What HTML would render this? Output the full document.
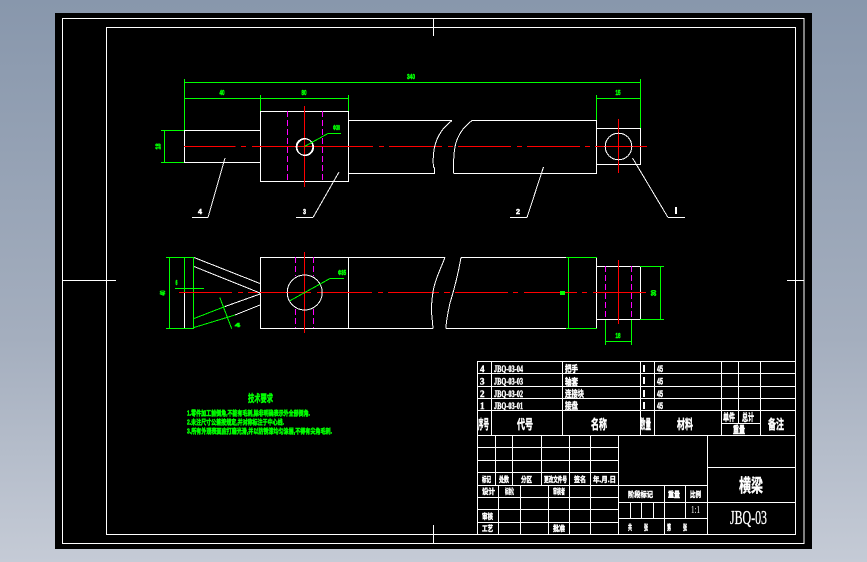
<!DOCTYPE html>
<html><head><meta charset="utf-8">
<style>
html,body{margin:0;padding:0;width:867px;height:562px;overflow:hidden;background:linear-gradient(180deg,#8897ac 0%,#a4aebe 60%,#c5cbd6 100%);}
svg{position:absolute;left:0;top:0;display:block}
text{font-family:"Liberation Sans","Noto Sans CJK SC",sans-serif;font-weight:700}
.w{fill:none;stroke:#fff;stroke-width:1}
.g{fill:none;stroke:#0f0;stroke-width:1}
.r{fill:none;stroke:#f00;stroke-width:1}
.m{fill:none;stroke:#f0f;stroke-width:1;stroke-dasharray:6 3}
.t{fill:#fff;font-size:9px;stroke:#fff;stroke-width:.5}
.gt{fill:#0f0;font-size:7.5px;stroke:#0f0;stroke-width:.6}
.n{font-family:"Liberation Serif","Noto Sans CJK SC",serif}
</style></head>
<body>
<svg width="867" height="562" viewBox="0 0 867 562" xmlns="http://www.w3.org/2000/svg" shape-rendering="crispEdges">
<rect x="55" y="13" width="757" height="536" fill="#000"/>
<rect class="w" x="62.5" y="18.5" width="741.5" height="525"/>
<rect class="w" x="106.5" y="27.5" width="689" height="507"/>
<path class="w" d="M433.5 18V36M433.5 525V543M62 280.5H116M787 280.5H804"/>

<!-- top view white -->
<path class="w" d="M184.5 130.5H260.5M184.5 162.5H260.5M184.5 130V163M260.5 111.5H348.5M260.5 181.5H348.5M260.5 111V182M348.5 111V182M348 120.5H452M348 173.5H435M472 120.5H596.5M454 173.5H596.5M596.5 120V174M596.5 128.5H640.5M596.5 164.5H640.5M640.5 128V165"/>
<path class="w" d="M192 217.5H208M296 217.5H313M510 217.5H527M668 217.5H685"/>

<!-- top view green -->
<path class="g" d="M184.5 79V130M184.5 82.5H640.5M640.5 79V128M260.5 95V111M184.5 98.5H348.5M348.5 95V111M596.5 95V120M596.5 98.5H640.5M161 130.5H184M161 162.5H184M164.5 130V163M328 133.5H341"/>

<!-- top view red -->
<path class="r" d="M184 146.5H235.5M241 146.5H246M252 146.5H373M379 146.5H384M389 146.5H442M448 146.5H453M458 146.5H511M517 146.5H522M527 146.5H580M585 146.5H590M595 146.5H647M304.5 106V187M618.5 119V173"/>
<path class="m" d="M287.5 111V181M322.5 111V181"/>

<!-- bottom view white -->
<path class="w" d="M260.5 257.5H348.5M260.5 328.5H348.5M260.5 257V329M348.5 257V329M348 257.5H445M348 328.5H433M461 257.5H568M446 328.5H568M596.5 257V329M596.5 266.5H640.5M596.5 319.5H640.5M640.5 266V320M184.5 292V328"/>

<!-- bottom view green -->
<path class="g" d="M166 257.5H194M166 328.5H194M169.5 257V329M184.5 257V292M193.5 257V329M175 288.5H204M566 257.5H597M566 328.5H597M568.5 257V329M640 266.5H664M640 319.5H664M660.5 266V320M605.5 320V345M631.5 320V345M605.5 341.5H631.5M330 278.5H344"/>

<!-- bottom view red -->
<path class="r" d="M179 292.5H232M238 292.5H243M248 292.5H311M317 292.5H372M378 292.5H383M388 292.5H439M444 292.5H450M455 292.5H508M513 292.5H518M524 292.5H577M582 292.5H587M593 292.5H646M304.5 252V333M618.5 260V324"/>
<path class="m" d="M295.5 257V276M313.5 257V276M295.5 309V328M313.5 309V328M605.5 266V320M631.5 266V320"/>

<!-- title block -->
<path class="w" d="M477.5 361.5H795.5M477.5 373.5H795.5M477.5 386.5H795.5M477.5 398.5H795.5M477.5 410.5H795.5M477.5 435.5H795.5M721.5 423.5H760.5"/>
<path class="w" d="M477.5 361V535M491.5 361V435M562.5 361V435M640.5 361V435M654.5 361V435M721.5 361V435M738.5 361V423M760.5 361V435"/>
<path class="w" d="M477.5 447.5H618.5M477.5 460.5H618.5M477.5 472.5H618.5M477.5 485.5H707.5M477.5 497.5H618.5M477.5 509.5H618.5M477.5 522.5H618.5M477.5 534.5H795.5M618.5 502.5H795.5M618.5 518.5H707.5M707.5 467.5H795.5"/>
<path class="w" d="M495.5 435V485M512.5 435V485M541.5 435V485M569.5 435V534M590.5 435V534M618.5 435V534M498.5 485V534M520.5 485V534M548.5 485V534M707.5 435V534M664.5 485V534M685.5 485V518M630.5 502V518M641.5 502V518M653.5 502V518"/>

<!-- curved & diagonal shapes -->
<path class="w" d="M452 120.5C442 128 436 138 434 150C433 156 433 162 433.5 167L434.5 168V173.5"/>
<path class="w" d="M472 120.5C462 128 456 138 454.5 150C453.5 156 453.5 165 453.5 173.5"/>
<path class="w" d="M445 257.5C440 270 435 280 433 292C431.5 302 431 310 432 317L433 328.5"/>
<path class="w" d="M461 257.5C458 275 454 290 450 303C448 312 446 322 446 328.5"/>
<circle class="w" cx="304.5" cy="146.8" r="8.3"/>
<circle class="w" cx="305.3" cy="147.3" r="8.3"/>
<circle class="w" cx="618.5" cy="146.5" r="13.3"/>
<circle class="w" cx="304.7" cy="292.5" r="17.5"/>
<path class="w" d="M225 158L208 217.5M339 172L313 217.5M543.5 167L527 217.5M632.5 158L668 217.5"/>
<path class="g" d="M304.5 146.5L328 133.5M290 300.7L330 278.5"/>
<path class="w" d="M194 257.5L260 283.5M194 266.5L260 293M225 306.5L260 294M235 315L260 305"/>
<path class="g" d="M194 318.5L225 306.5M194 327.5L235 315M219.7 297.3L231.7 328.7"/>
<rect x="560" y="291" width="5" height="4" fill="#0f0"/>

<!-- dimension text -->
<text class="gt" x="411" y="79" text-anchor="middle" textLength="8" lengthAdjust="spacingAndGlyphs">340</text>
<text class="gt" x="222" y="95" text-anchor="middle" textLength="5" lengthAdjust="spacingAndGlyphs">40</text>
<text class="gt" x="304" y="95" text-anchor="middle" textLength="5" lengthAdjust="spacingAndGlyphs">80</text>
<text class="gt" x="618" y="95" text-anchor="middle" textLength="5" lengthAdjust="spacingAndGlyphs">15</text>
<text class="gt" x="336.5" y="130" text-anchor="middle" textLength="7" lengthAdjust="spacingAndGlyphs">Φ30</text>
<text class="gt" transform="translate(160.5,146.5) rotate(-90)" text-anchor="middle" textLength="6" lengthAdjust="spacingAndGlyphs">18</text>
<text class="gt" transform="translate(165,293) rotate(-90)" text-anchor="middle" textLength="5" lengthAdjust="spacingAndGlyphs">40</text>
<text class="gt" x="175.5" y="285" textLength="2" lengthAdjust="spacingAndGlyphs">6</text>
<text class="gt" x="235" y="327" font-size="5" style="font-size:5px" textLength="5" lengthAdjust="spacingAndGlyphs">4</text>
<text class="gt" x="338" y="275" textLength="8" lengthAdjust="spacingAndGlyphs">Φ35</text>
<text class="gt" transform="translate(656,293) rotate(-90)" text-anchor="middle" textLength="6" lengthAdjust="spacingAndGlyphs">30</text>
<text class="gt" x="618" y="338" text-anchor="middle" textLength="5" lengthAdjust="spacingAndGlyphs">18</text>

<text class="t" style="font-size:7.5px" x="198" y="214" textLength="4" lengthAdjust="spacingAndGlyphs">4</text>
<text class="t" style="font-size:7.5px" x="303" y="214" textLength="3" lengthAdjust="spacingAndGlyphs">3</text>
<text class="t" style="font-size:7.5px" x="516" y="214" textLength="4" lengthAdjust="spacingAndGlyphs">2</text>
<rect x="675" y="207" width="2" height="7" fill="#fff"/>

<!-- technical requirements -->
<g fill="#0f0" stroke="#0f0" stroke-width=".5">
<text x="248" y="402" font-size="10" textLength="25" lengthAdjust="spacingAndGlyphs">技术要求</text>
<text x="187" y="415.5" font-size="7" textLength="123" lengthAdjust="spacingAndGlyphs">1.零件加工前倒角,不能有毛刺,除非明确表示外全部倒角.</text>
<text x="187" y="424.5" font-size="7" textLength="97" lengthAdjust="spacingAndGlyphs">2.未注尺寸公差按规定,并对称标注于中心线.</text>
<text x="187" y="433.5" font-size="7" textLength="145" lengthAdjust="spacingAndGlyphs">3.所有外观表面应打磨光滑,并以防锈漆均匀涂层,不得有尖角毛刺.</text>
</g>

<!-- table text -->
<g fill="#fff" stroke="#fff" stroke-width=".45" font-size="9">
<text class="n" x="480" y="372">4</text>
<text class="n" x="480" y="384.5">3</text>
<text class="n" x="480" y="397">2</text>
<text class="n" x="480" y="409">1</text>
<text class="n" x="494" y="372" font-size="9" textLength="29" lengthAdjust="spacingAndGlyphs">JBQ-03-04</text>
<text class="n" x="494" y="384.5" font-size="9" textLength="29" lengthAdjust="spacingAndGlyphs">JBQ-03-03</text>
<text class="n" x="494" y="397" font-size="9" textLength="29" lengthAdjust="spacingAndGlyphs">JBQ-03-02</text>
<text class="n" x="494" y="409" font-size="9" textLength="29" lengthAdjust="spacingAndGlyphs">JBQ-03-01</text>
<text x="565" y="372" textLength="13" lengthAdjust="spacingAndGlyphs">把手</text>
<text x="565" y="385" textLength="13" lengthAdjust="spacingAndGlyphs">轴套</text>
<text x="565" y="397" textLength="19" lengthAdjust="spacingAndGlyphs">连接块</text>
<text x="565" y="409" textLength="13" lengthAdjust="spacingAndGlyphs">接盘</text>
<rect x="643" y="365" width="2" height="7" stroke="none"/>
<rect x="643" y="377" width="2" height="7" stroke="none"/>
<rect x="643" y="390" width="2" height="7" stroke="none"/>
<rect x="643" y="402" width="2" height="7" stroke="none"/>
<text x="657" y="372" textLength="6" lengthAdjust="spacingAndGlyphs">45</text>
<text x="657" y="384.5" textLength="6" lengthAdjust="spacingAndGlyphs">45</text>
<text x="657" y="397" textLength="6" lengthAdjust="spacingAndGlyphs">45</text>
<text x="657" y="409" textLength="6" lengthAdjust="spacingAndGlyphs">45</text>
<text x="478" y="429" font-size="13" textLength="11" lengthAdjust="spacingAndGlyphs">序号</text>
<text x="517" y="429" font-size="13" textLength="16" lengthAdjust="spacingAndGlyphs">代号</text>
<text x="591" y="429" font-size="13" textLength="16" lengthAdjust="spacingAndGlyphs">名称</text>
<text x="640" y="429" font-size="13" textLength="11" lengthAdjust="spacingAndGlyphs">数量</text>
<text x="677" y="429" font-size="13" textLength="16" lengthAdjust="spacingAndGlyphs">材料</text>
<text x="723" y="421" font-size="10" textLength="12" lengthAdjust="spacingAndGlyphs">单件</text>
<text x="742" y="421" font-size="10" textLength="12" lengthAdjust="spacingAndGlyphs">总计</text>
<text x="733" y="433.5" font-size="10" textLength="12" lengthAdjust="spacingAndGlyphs">重量</text>
<text x="768" y="429" font-size="13" textLength="16" lengthAdjust="spacingAndGlyphs">备注</text>
</g>
<g fill="#fff" stroke="#fff" stroke-width=".45" font-size="7.5">
<text x="482" y="482" textLength="9" lengthAdjust="spacingAndGlyphs">标记</text>
<text x="499" y="482" textLength="10" lengthAdjust="spacingAndGlyphs">处数</text>
<text x="521" y="482" textLength="11" lengthAdjust="spacingAndGlyphs">分区</text>
<text x="544" y="482" textLength="23" lengthAdjust="spacingAndGlyphs">更改文件号</text>
<text x="574" y="482" textLength="12" lengthAdjust="spacingAndGlyphs">签名</text>
<text x="593" y="482" textLength="23" lengthAdjust="spacingAndGlyphs">年.月.日</text>
<text x="482" y="494" textLength="13" lengthAdjust="spacingAndGlyphs">设计</text>
<text x="505" y="494" textLength="9" lengthAdjust="spacingAndGlyphs">标准化</text>
<text x="553" y="494" textLength="12" lengthAdjust="spacingAndGlyphs">审核者</text>
<text x="482" y="519" textLength="11" lengthAdjust="spacingAndGlyphs">审核</text>
<text x="482" y="531" textLength="11" lengthAdjust="spacingAndGlyphs">工艺</text>
<text x="553" y="531" textLength="12" lengthAdjust="spacingAndGlyphs">批准</text>
<text x="628" y="497" textLength="25" lengthAdjust="spacingAndGlyphs">阶段标记</text>
<text x="668" y="497" textLength="12" lengthAdjust="spacingAndGlyphs">重量</text>
<text x="690" y="497" textLength="11" lengthAdjust="spacingAndGlyphs">比例</text>
<text x="628" y="530" textLength="4" lengthAdjust="spacingAndGlyphs">共</text>
<text x="644" y="530" textLength="4" lengthAdjust="spacingAndGlyphs">张</text>
<text x="667" y="530" textLength="4" lengthAdjust="spacingAndGlyphs">第</text>
<text x="683" y="530" textLength="4" lengthAdjust="spacingAndGlyphs">张</text>
</g>
<g fill="#fff">
<text class="n" x="691" y="513" font-size="10" style="font-weight:400" textLength="9" lengthAdjust="spacingAndGlyphs">1:1</text>
<text x="739" y="492" font-size="18" stroke="#fff" stroke-width=".4" textLength="24" lengthAdjust="spacingAndGlyphs">横梁</text>
<text class="n" x="730" y="524" font-size="20" stroke="#fff" stroke-width=".3" style="font-weight:400" textLength="37" lengthAdjust="spacingAndGlyphs">JBQ-03</text>
</g>
</svg>
</body></html>
